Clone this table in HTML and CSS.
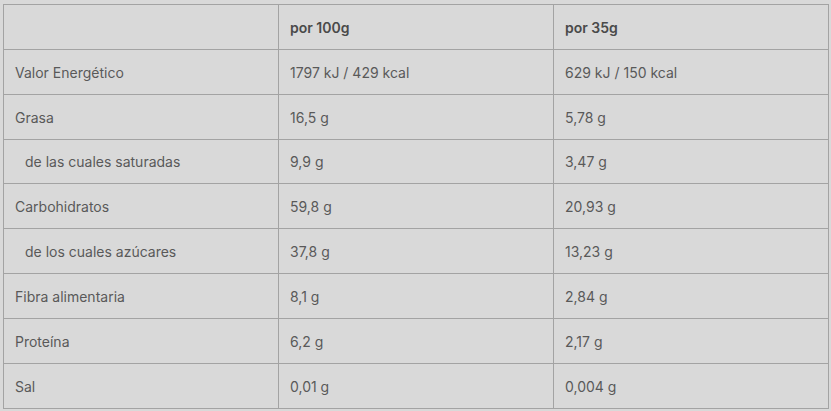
FILE: index.html
```html
<!DOCTYPE html>
<html lang="es">
<head>
<meta charset="utf-8">
<link rel="stylesheet" href="styles.css">
</head>
<body>
<table class="nutri">
  <thead>
    <tr><th></th><th>por 100g</th><th>por 35g</th></tr>
  </thead>
  <tbody>
    <tr><td>Valor Energético</td><td>1797 kJ / 429 kcal</td><td>629 kJ / 150 kcal</td></tr>
    <tr><td>Grasa</td><td>16,5 g</td><td>5,78 g</td></tr>
    <tr><td class="sub">de las cuales saturadas</td><td>9,9 g</td><td>3,47 g</td></tr>
    <tr><td>Carbohidratos</td><td>59,8 g</td><td>20,93 g</td></tr>
    <tr><td class="sub">de los cuales azúcares</td><td>37,8 g</td><td>13,23 g</td></tr>
    <tr><td>Fibra alimentaria</td><td>8,1 g</td><td>2,84 g</td></tr>
    <tr><td>Proteína</td><td>6,2 g</td><td>2,17 g</td></tr>
    <tr><td>Sal</td><td>0,01 g</td><td>0,004 g</td></tr>
  </tbody>
</table>
</body>
</html>
```
FILE: styles.css
```css
html, body {
  margin: 0;
  background: #d9d9d9;
}
body {
  padding: 4px 0 0 3px;
  font-family: Inter, "Liberation Sans", sans-serif;
  font-size: 14px;
  color: #595959;
}
.nutri {
  border-collapse: collapse;
  width: 826px;
  table-layout: fixed;
  background: #d9d9d9;
}
.nutri th, .nutri td {
  border: 1px solid #a3a3a3;
  height: 44.85px;
  padding: 1px 11px 0;
  text-align: left;
  vertical-align: middle;
  box-sizing: border-box;
}
.nutri th {
  font-weight: 600;
  color: #4a4a4a;
}
.nutri td.sub {
  padding-left: 21px;
}
```
